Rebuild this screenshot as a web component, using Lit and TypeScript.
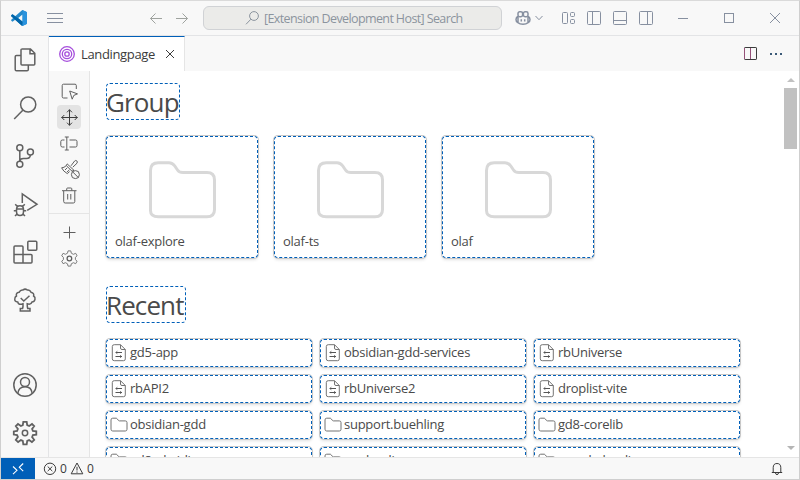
import { LitElement, html, svg, css, TemplateResult, SVGTemplateResult } from "lit";
import { customElement, property } from "lit/decorators.js";

type Glyph = { box: number; body: SVGTemplateResult };

const glyphs: Record<string, Glyph> = {
  logo: {
    box: 16,
    body: svg`<path fill="#2489ca" stroke="none" d="M11.3 0 15.2 1.7Q16 2 16 3V13Q16 14 15.2 14.3L11.3 16 4.2 9.7 1.5 11.8.2 10.7V9.7L2.2 8 .2 6.3V5.3L1.5 4.2 4.2 6.3ZM11.5 4.6 7.2 8 11.5 11.4Z"/><path fill="#0065a9" stroke="none" d="M1.5 4.2.2 5.3V6.3L10.5 15.5 11.3 16 12 12 7 8.3Z"/><path fill="#2a93dd" stroke="none" d="M11.3 0 15.2 1.7Q16 2 16 3V13Q16 14 15.2 14.3L11.3 16Q11.6 15 11.6 14V2Q11.6 1 11.3 0Z"/>`,
  },
  menu: { box: 16, body: svg`<path d="M0 3.5H16M0 8.5H16M0 12.5H16"/>` },
  left: { box: 16, body: svg`<path d="M14 8.5H2.5M7.5 3.5 2.5 8.5 7.5 13.5"/>` },
  right: { box: 16, body: svg`<path d="M2 8.5H13.5M8.5 3.5 13.5 8.5 8.5 13.5"/>` },
  lens: { box: 16, body: svg`<circle cx="9" cy="6" r="4.4"/><path d="M5.9 9.2 1 14.3"/>` },
  copilot: {
    box: 16,
    body: svg`<g stroke-width="1.5"><rect x="3" y="1.8" width="4.6" height="5" rx="1.7"/><rect x="8.4" y="1.8" width="4.6" height="5" rx="1.7"/><path d="M3 6.2Q1 7.5 1 9.5T2.5 12.3Q5 14.3 8 14.3T13.5 12.3Q15 11.5 15 9.5T13 6.2M3 7V12M13 7V12"/><path d="M6.3 9.2V11.5M9.7 9.2V11.5"/></g>`,
  },
  chevron: { box: 10, body: svg`<path d="M1.5 3 5 6.7 8.5 3"/>` },
  layout: {
    box: 16,
    body: svg`<rect x="2.5" y="2.5" width="5" height="11" rx="1"/><rect x="10.5" y="2.5" width="4" height="4" rx="1"/><rect x="10.5" y="9.5" width="4" height="4" rx="1"/>`,
  },
  sideLeft: { box: 16, body: svg`<rect x="1.5" y="1.5" width="13" height="13" rx="1"/><path d="M6.5 2V14"/>` },
  panel: { box: 16, body: svg`<rect x="1.5" y="1.5" width="13" height="13" rx="1"/><path d="M2 10.5H14"/>` },
  sideRight: { box: 16, body: svg`<rect x="1.5" y="1.5" width="13" height="13" rx="1"/><path d="M9.5 2V14"/>` },
  minimize: { box: 12, body: svg`<path d="M1 6.5H11"/>` },
  maximize: { box: 12, body: svg`<rect x="1.5" y="1.5" width="9" height="9"/>` },
  close: { box: 12, body: svg`<path d="M1 1 11 11M11 1 1 11"/>` },
  rings: {
    box: 16,
    body: svg`<g stroke="#a64fdc"><circle cx="8" cy="8" r="7.3" stroke-width="1.3"/><circle cx="8" cy="8" r="4.7" stroke-width="1.3"/><circle cx="8" cy="8" r="2.2" stroke-width="1.3"/></g>`,
  },
  tabClose: { box: 10, body: svg`<path d="M1 1 9 9M9 1 1 9"/>` },
  split: { box: 16, body: svg`<rect x="2.5" y="1.5" width="12" height="12" rx=".6"/><path stroke="#955078" d="M2.5 2V13M8.5 2V13"/>` },
  dots: { box: 16, body: svg`<path fill="#3b5a78" stroke="none" d="M2 7h2v2h-2zM7 7h2v2h-2zM12 7h2v2h-2z"/>` },
  files: {
    box: 24,
    body: svg`<path d="M8.5 1H17.5L21.8 5.3V16Q21.8 17 20.8 17H9Q8 17 8 16V1.8Q8 1 9 1M17 1.2V5.8H21.6"/><path d="M8 7.5H3.5Q2.2 7.5 2.2 8.8V21.5Q2.2 22.8 3.5 22.8H14Q15.3 22.8 15.3 21.5V17"/>`,
  },
  search: { box: 24, body: svg`<circle cx="15.2" cy="8.5" r="7.6"/><path d="M9.8 14.2 1.2 23"/>` },
  branch: {
    box: 24,
    body: svg`<circle cx="6.8" cy="3.7" r="3"/><circle cx="6.8" cy="20.3" r="3"/><circle cx="17.4" cy="8" r="3"/><path d="M6.8 6.8V17.2M17.4 11Q17.2 14.5 13.5 14.5H10.5Q7 14.5 6.8 17.2"/>`,
  },
  debug: {
    box: 24,
    body: svg`<path d="M9.3 11V2L24 12.3 14.2 18.3"/><path d="M3.5 17.5Q3.5 13.7 7 13.7T10.5 17.5V19.5Q10.5 23.5 7 23.5T3.5 19.5ZM3.5 17H10.5M4.6 14.6 2.2 12.3M9.4 14.6 11.8 12.3M3.4 18.8H.8M10.6 18.8H13.2M4.3 21.8 2 24M9.7 21.8 12 24"/>`,
  },
  extensions: {
    box: 24,
    body: svg`<path d="M2 6H9Q10 6 10 7V14.5H18Q19 14.5 19 15.5V22Q19 23 18 23H2Q1 23 1 22V7Q1 6 2 6ZM1 14.5H10V23"/><rect x="14.8" y="1.2" width="9" height="9" rx="1"/>`,
  },
  tree: {
    box: 24,
    body: svg`<path d="M10 15.8Q5.5 17.5 4.7 14 1.3 13.8 1.8 10.7 2 8.8 3.5 8 2.5 4.8 6.2 4.2 7.5 1.5 10 2 12 .2 14.3 2 17 1.5 18 4.2 21.5 5 20.6 8 22.5 9.2 22 11.3 21.3 14 19 14 18 17 14.2 15.8 14.2 19 14.7 20.5H17V23H7.3V20.5H9.6Q10.2 19 10 15.8Z"/><path d="M7.7 10 10.8 13 16.5 7.8"/>`,
  },
  account: {
    box: 24,
    body: svg`<circle cx="12" cy="12" r="11.2"/><circle cx="12" cy="9" r="4.5"/><path d="M4.8 20.5Q5.5 13.8 12 13.7T19.2 20.5"/>`,
  },
  gear: {
    box: 24,
    body: svg`<path stroke-width="1.8" d="M9.8 4.2 10.3.8H13.7L14.2 4.2 16.2 5 19 3 21.2 5.2 19.1 8 19.9 9.9 23.3 10.4V13.6L19.9 14.1 19.1 16 21.2 18.8 18.9 21.1 16.1 19.1 14.2 19.9 13.7 23.3H10.3L9.8 19.9 7.9 19.1 5.1 21.1 2.8 18.9 4.9 16 4.1 14.1.8 13.6V10.4L4.1 9.9 4.9 8 2.8 5.2 5 3 7.9 5Z"/><circle cx="12" cy="12" r="2.7"/>`,
  },
  pick: { box: 16, body: svg`<path d="M6.5 15H2.5Q1.2 15 1.2 13.7V2.5Q1.2 1.2 2.5 1.2H14Q15.3 1.2 15.3 2.5V6M8.7 8 16.5 10.9 12.8 12.4 11.2 16.2Z"/>` },
  move: { box: 16, body: svg`<path d="M8.5.5V16.5M.5 8.5H16.5M6 3.3 8.5.8 11 3.3M6 13.7 8.5 16.2 11 13.7M3.3 6 .8 8.5 3.3 11M13.7 6 16.2 8.5 13.7 11"/>` },
  rename: { box: 16, body: svg`<path d="M5.8 2V15M3.8 2H7.8M3.8 15H7.8M3.5 5H1.5Q-.2 5-.2 6.5V10.5Q-.2 12 1.5 12H3.5M8.5 5H14.5Q16 5 16 6.5V10.5Q16 12 14.5 12H8.5"/>` },
  brush: {
    box: 20,
    body: svg`<path d="M12 6.8 15.6 2Q16.8 .9 17.8 1.9T18 4.2L13.8 8.2M8.2 4.9 15 11.4 13 12.2 7.3 6.6ZM7.3 6.6Q5 8.9 2.6 8.8 4.2 12.3 8.3 14.6L10.6 12.6M6 11 8.2 8.8M8 13 10.4 10.8"/><circle cx="16.4" cy="15.6" r="4"/><path d="M13.6 12.8 19.2 18.4"/>`,
  },
  trash: { box: 16, body: svg`<path d="M1 3.7H15.5M5.7 3.5V1.8Q5.7 1 6.7 1H9.8Q10.8 1 10.8 1.8V3.5M2.7 4V14.5Q2.7 16 4.2 16H12.3Q13.8 16 13.8 14.5V4M6.7 7V12.5M9.8 7V12.5"/>` },
  plus: { box: 16, body: svg`<path d="M8.5 2.5V14.5M2.5 8.5H14.5"/>` },
  cog: {
    box: 16,
    body: svg`<path d="M7 .9H9.8L10.3 3.2 12.4 4.3 14.7 3.3 16.1 5.8 14.4 7.3V9.7L16.1 11.2 14.7 13.7 12.4 12.7 10.3 13.8 9.8 16.1H7L6.5 13.8 4.4 12.7 2.1 13.7.7 11.2 2.4 9.7V7.3L.7 5.8 2.1 3.3 4.4 4.3 6.5 3.2Z" stroke="#7c7c7c" stroke-linejoin="round"/><circle cx="8.4" cy="8.5" r="2.3" stroke-width="1.3"/>`,
  },
  folder: { box: 18, body: svg`<path d="M1 13.2V3.9Q1 2.2 2.7 2.2H6Q6.8 2.2 7.3 2.9L8.3 4.3Q8.7 4.9 9.5 4.9H15.3Q17 4.9 17 6.5V13.3Q17 15 15.3 15H2.7Q1 15 1 13.2Z"/>` },
  workspace: {
    box: 18,
    body: svg`<path d="M4.3.7H10.5L15.3 5.5V14.9Q15.3 16.7 13.6 16.7H4.3Q2.3 16.7 2.3 14.9V2.5Q2.3.7 4.3.7ZM10.5.7V4Q10.5 5.5 12 5.5H15.3"/><path stroke="#555" d="M12 8.5H5.5M7.3 7.3 6 8.5 7.3 9.7M5.5 12.5H12M10.3 11.3 11.6 12.5 10.3 13.7"/>`,
  },
  bigFolder: { box: 68, body: svg`<path stroke-width="3" d="M1.5 49.5V9.5Q1.5 1.7 9.3 1.7H20Q23.5 1.7 25.8 5L28.5 9Q30.2 11.6 34 11.6H58Q65.5 11.6 65.5 19V48.5Q65.5 55.8 58 55.8H9.3Q1.5 55.8 1.5 49.5Z"/>` },
  remote: { box: 16, body: svg`<path stroke-width="1.1" d="M3 5.5 7 9.3 3 13.2M13.2 2.5 9.3 6.3 13.2 10.2"/>` },
  error: { box: 14, body: svg`<circle cx="7" cy="6.8" r="5.7"/><path d="M4.7 4.5 9.3 9.1M9.3 4.5 4.7 9.1"/>` },
  warning: { box: 14, body: svg`<path d="M7 1 12.8 11.8H1.2ZM7 4.8V8.5M7 9.5V10.7"/>` },
  bell: { box: 14, body: svg`<path d="M1.8 10.5H12.2M3.2 10.3V5.7Q3.2 1.5 7 1.5T10.8 5.7V10.3M5.5 11Q5.7 12.6 7 12.6T8.5 11"/>` },
};

@customElement("ui-icon")
export class UiIcon extends LitElement {
  @property() name = "";
  @property({ type: Number }) size = 16;

  static styles = css`
    :host { display: block; flex: none; line-height: 0; }
    .glyph { display: block; fill: none; stroke: currentColor; overflow: visible; }
    .bold { stroke-width: 1.5; }
  `;

  render() {
    const g = glyphs[this.name];
    if (!g) return html``;
    return html`<svg class="glyph ${g.box === 24 ? "bold" : ""}" width=${this.size} height=${this.size} viewBox="0 0 ${g.box} ${g.box}">${g.body}</svg>`;
  }
}

const icon = (name: string, size = 16): TemplateResult => html`<ui-icon name=${name} size=${size}></ui-icon>`;

@customElement("title-bar")
export class TitleBar extends LitElement {
  static styles = css`
    :host { display: flex; align-items: center; height: 34px; border-bottom: 1px solid #e3e4e6; background: #f8f8f8; color: #8790a0; flex: none; }
    .logo { margin-left: 10px; }
    .menu { margin-left: 20px; margin-right: 85px; }
    .nav { display: flex; gap: 10px; color: #9fa39f; margin-right: 13px; }
    .command { box-sizing: border-box; width: 299px; height: 24px; border: 1px solid #d0d2d5; border-radius: 6px; background: #ebebe9; display: flex; align-items: center; padding-left: 41px; gap: 3px; font-size: 12.5px; color: #8b949e; white-space: nowrap; letter-spacing: -0.61px; }
    .copilot { display: flex; align-items: center; gap: 3px; margin-left: 13px; margin-right: 16px; }
    .layouts { display: flex; gap: 10px; margin-right: 23px; }
    .controls { display: flex; gap: 34px; }
  `;

  render() {
    return html`
      <div class="logo">${icon("logo", 16)}</div>
      <div class="menu">${icon("menu")}</div>
      <div class="nav">${icon("left")}${icon("right")}</div>
      <div class="command">${icon("lens")}<span>[Extension Development Host] Search</span></div>
      <div class="copilot">${icon("copilot")}${icon("chevron", 10)}</div>
      <div class="layouts">${["layout", "sideLeft", "panel", "sideRight"].map((n) => icon(n))}</div>
      <div class="controls">${["minimize", "maximize", "close"].map((n) => icon(n, 12))}</div>
    `;
  }
}

@customElement("activity-bar")
export class ActivityBar extends LitElement {
  static styles = css`
    :host { display: flex; flex-direction: column; justify-content: space-between; width: 47px; flex: none; border-right: 1px solid #e3e4e6; background: #f8f8f8; color: #616161; }
    .item { height: 48px; display: flex; align-items: center; justify-content: center; padding-left: 1px; }
  `;

  private group(names: string[]) {
    return html`<div>${names.map((n) => html`<div class="item">${icon(n, 24)}</div>`)}</div>`;
  }

  render() {
    return html`${this.group(["files", "search", "branch", "debug", "extensions", "tree"])}${this.group(["account", "gear"])}`;
  }
}

@customElement("landing-page")
export class LandingPage extends LitElement {
  static styles = css`
    :host { display: flex; flex: 1; min-height: 0; background: #fff; }
    .tools { width: 40px; flex: none; border-right: 1px solid #e5e5e5; background: #f8f8f8; color: #5f5f5f; }
    .set { display: flex; flex-direction: column; align-items: center; gap: 2px; padding: 8px 0 6px; }
    .set + .set { border-top: 1px solid #e5e5e5; padding-top: 6px; }
    .tool { width: 24px; height: 24px; border-radius: 4px; display: flex; align-items: center; justify-content: center; }
    .active { background: #e3e3e3; color: #3b3b3b; }
    .page { flex: 1; overflow: hidden; padding: 12px 0 0 16px; color: #4a4a4a; }
    .heading { box-sizing: border-box; display: block; height: 37px; line-height: 36px; margin: 0 0 16px; border: 1px dashed #005fb8; border-radius: 4px; font-size: 26px; font-weight: 400; text-indent: -1px; white-space: nowrap; }
    .group { width: 74px; letter-spacing: -0.85px; }
    .recent { width: 80px; letter-spacing: -0.9px; }
    .cards { display: flex; gap: 16px; margin-bottom: 28px; }
    .card, .row { box-sizing: border-box; border: 1px dashed #005fb8; border-radius: 4px; box-shadow: 0 0 0 1px #c8c8c8, 0 2px 3px rgba(0, 0, 0, 0.12); font-size: 13px; white-space: nowrap; letter-spacing: -0.25px; }
    .card { width: 152px; height: 122px; display: flex; flex-direction: column; }
    .picture { color: #d8d8d8; height: 92px; padding: 24px 0 0 42px; box-sizing: border-box; }
    .name { padding-left: 8px; line-height: 24px; }
    .rows { display: grid; grid-template-columns: repeat(3, 206px); grid-auto-rows: 28px; gap: 8px; }
    .row { display: flex; align-items: center; gap: 2px; padding-left: 3px; }
    .row span { line-height: 18px; padding-bottom: 2px; }
    .row ui-icon { color: #737373; }
    .scroll { width: 16px; flex: none; display: flex; flex-direction: column; align-items: center; justify-content: space-between; padding: 7px 2px 7px 1px; box-sizing: border-box; }
    .up, .down { width: 0; height: 0; border: 4px solid transparent; }
    .up { border-top: 0; border-bottom-color: #c1c1c1; }
    .down { border-bottom: 0; border-top-color: #b5b5b5; }
    .thumb { width: 13px; height: 61px; background: #c1c1c1; margin: 6px 0 auto; }
  `;

  private groups = ["olaf-explore", "olaf-ts", "olaf"];
  private entries: [string, string][] = [
    ["workspace", "gd5-app"], ["workspace", "obsidian-gdd-services"], ["workspace", "rbUniverse"],
    ["workspace", "rbAPI2"], ["workspace", "rbUniverse2"], ["workspace", "droplist-vite"],
    ["folder", "obsidian-gdd"], ["folder", "support.buehling"], ["folder", "gd8-corelib"],
    ["folder", "gd8-obsidian"], ["folder", "my-landing"], ["folder", "vscode-landing"],
  ];

  private tool(name: string, active = false) {
    return html`<div class="tool ${active ? "active" : ""}">${icon(name, name === "brush" ? 20 : 16)}</div>`;
  }

  render() {
    return html`
      <div class="tools">
        <div class="set">${this.tool("pick")}${this.tool("move", true)}${this.tool("rename")}${this.tool("brush")}${this.tool("trash")}</div>
        <div class="set">${this.tool("plus")}${this.tool("cog")}</div>
      </div>
      <div class="page">
        <h1 class="heading group">Group</h1>
        <div class="cards">
          ${this.groups.map((g) => html`<div class="card"><div class="picture">${icon("bigFolder", 68)}</div><div class="name">${g}</div></div>`)}
        </div>
        <h1 class="heading recent">Recent</h1>
        <div class="rows">${this.entries.map(([i, t]) => html`<div class="row">${icon(i, 18)}<span>${t}</span></div>`)}</div>
      </div>
      <div class="scroll"><div class="up"></div><div class="thumb"></div><div class="down"></div></div>
    `;
  }
}

@customElement("app-root")
export class AppRoot extends LitElement {
  static styles = css`
    :host { display: flex; flex-direction: column; box-sizing: border-box; width: 800px; height: 480px; overflow: hidden; border: 1px solid #cfcfcf; border-top-color: #dadada; background: #f8f8f8; color: #3b3b3b; font-family: "Open Sans", "Noto Sans", sans-serif; font-size: 13px; }
    .body { display: flex; flex: 1; min-height: 0; }
    .editor { display: flex; flex-direction: column; flex: 1; min-width: 0; }
    .tabs { height: 35px; flex: none; display: flex; align-items: stretch; background: #f8f8f8; }
    .tab { box-sizing: border-box; width: 136px; border-top: 1px solid #005fb8; border-right: 1px solid #e5e5e5; background: #fff; display: flex; align-items: center; padding-left: 10px; }
    .label { width: 75px; margin: 0 9px 0 6px; letter-spacing: -0.35px; white-space: nowrap; }
    .actions { margin-left: auto; display: flex; align-items: center; gap: 10px; padding-right: 15px; }
    .status { height: 21px; flex: none; border-top: 1px solid #e5e5e5; display: flex; align-items: center; font-size: 12px; }
    .remote { align-self: stretch; width: 34px; background: #005fb8; color: #fff; display: flex; align-items: center; justify-content: center; }
    .problems { display: flex; align-items: center; gap: 3px; margin-left: 8px; }
    .bell { margin-left: auto; margin-right: 15px; }
  `;

  render() {
    return html`
      <title-bar></title-bar>
      <div class="body">
        <activity-bar></activity-bar>
        <div class="editor">
          <div class="tabs">
            <div class="tab">${icon("rings")}<span class="label">Landingpage</span>${icon("tabClose", 10)}</div>
            <div class="actions">${icon("split")}${icon("dots")}</div>
          </div>
          <landing-page></landing-page>
        </div>
      </div>
      <div class="status">
        <div class="remote">${icon("remote")}</div>
        <div class="problems">${icon("error", 14)}<span>0</span>${icon("warning", 14)}<span>0</span></div>
        <div class="bell">${icon("bell", 14)}</div>
      </div>
    `;
  }
}
